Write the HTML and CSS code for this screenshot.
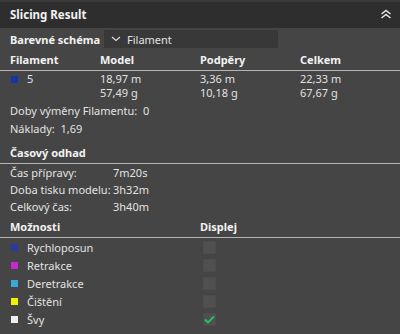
FILE: index.html
```html
<!DOCTYPE html>
<html>
<head>
<meta charset="utf-8">
<link rel="stylesheet" href="styles.css">
</head>
<body>
<div class="panel">
  <div class="header">
    <span class="title">Slicing Result</span>
    <svg class="collapse" width="12" height="10" viewBox="0 0 12 10"><path d="M1.5 5 L6 1.5 L10.5 5 M1.5 9 L6 5.5 L10.5 9" fill="none" stroke="#e8e8e8" stroke-width="1.4"/></svg>
  </div>
  <div class="scheme">
    <span class="bold">Barevné schéma</span>
    <div class="combo">
      <svg width="10" height="6" viewBox="0 0 10 6"><path d="M1 1 L5 4.5 L9 1" fill="none" stroke="#ddd" stroke-width="1.2"/></svg>
      <span>Filament</span>
    </div>
  </div>
  <div class="grid4 head">
    <span>Filament</span><span>Model</span><span>Podpěry</span><span>Celkem</span>
  </div>
  <div class="grid4 data">
    <span class="fil"><i class="sq" style="background:#1436a8"></i>5</span>
    <span>18,97 m<br>57,49 g</span>
    <span>3,36 m<br>10,18 g</span>
    <span>22,33 m<br>67,67 g</span>
  </div>
  <div class="line">Doby výměny Filamentu:&nbsp; 0</div>
  <div class="line">Náklady:&nbsp; 1,69</div>
  <div class="section">Časový odhad</div>
  <div class="times">
    <span>Čas přípravy:</span><span>7m20s</span>
    <span>Doba tisku modelu:</span><span>3h32m</span>
    <span>Celkový čas:</span><span>3h40m</span>
  </div>
  <div class="opts head">
    <span>Možnosti</span><span>Displej</span>
  </div>
  <div class="legend">
    <div class="row"><span class="lbl"><i class="sq" style="background:#2a3aa0"></i>Rychloposun</span><span class="cb"></span></div>
    <div class="row"><span class="lbl"><i class="sq" style="background:#c42ad0"></i>Retrakce</span><span class="cb"></span></div>
    <div class="row"><span class="lbl"><i class="sq" style="background:#3aa8d8"></i>Deretrakce</span><span class="cb"></span></div>
    <div class="row"><span class="lbl"><i class="sq" style="background:#f2f200"></i>Čištění</span><span class="cb"></span></div>
    <div class="row"><span class="lbl"><i class="sq" style="background:#eeeeee"></i>Švy</span><span class="cb on"><svg width="11" height="9" viewBox="0 0 11 9"><path d="M1 4.5 L4 7.5 L10 1.5" fill="none" stroke="#1ec85a" stroke-width="1.8"/></svg></span></div>
  </div>
</div>
</body>
</html>
```
FILE: styles.css
```css
* { box-sizing: border-box; }
html, body { margin: 0; padding: 0; }
body {
  width: 400px;
  height: 334px;
  background: #454545;
  font-family: "Noto Sans", "Open Sans", sans-serif;
  font-size: 11px;
  color: #e2e2e2;
  overflow: hidden;
}
.panel { display: flex; flex-direction: column; }
.header {
  height: 28px;
  background: #2e2e2e;
  border-top: 2px solid #3a3a3a;
  display: flex;
  align-items: center;
  justify-content: space-between;
  padding: 0 8px 0 10px;
}
.title { font-weight: 700; color: #f2f2f2; font-size: 11.5px; margin-top: -2px; }
.collapse { margin-top: -2px; }
.scheme {
  display: flex;
  align-items: center;
  height: 22px;
  padding: 0 10px;
}
.bold { font-weight: 700; color: #f2f2f2; width: 94px; }
.combo {
  width: 174px;
  height: 18px;
  background: #383838;
  border-radius: 2px;
  display: flex;
  align-items: center;
  gap: 6px;
  padding-left: 7px;
  color: #e2e2e2;
}
.grid4 {
  display: grid;
  grid-template-columns: 90px 100px 100px 1fr;
  padding: 0 10px;
}
.head {
  font-weight: 700;
  color: #f2f2f2;
  border-bottom: 1px solid #b4b4b4;
  height: 21px;
  line-height: 19px;
}
.data { padding-top: 1px; line-height: 14px; height: 31px; }
.fil { display: flex; align-items: flex-start; }
.sq { display: inline-block; width: 7px; height: 7px; margin: 4px 9px 0 1px; flex: none; }
.line { padding: 0 10px; height: 18px; line-height: 18px; }
.section {
  font-weight: 700;
  color: #f2f2f2;
  padding: 0 10px;
  margin-top: 6px;
  height: 20px;
  line-height: 17px;
  border-bottom: 1px solid #b4b4b4;
}
.times {
  display: grid;
  grid-template-columns: 103px 1fr;
  padding: 0 10px;
  line-height: 17px;
}
.opts {
  display: grid;
  grid-template-columns: 190px 1fr;
  padding: 0 10px;
  margin-top: 2px;
}
.legend { padding: 0 10px; }
.row { display: flex; height: 18.2px; align-items: center; }
.lbl { width: 193px; display: flex; align-items: center; }
.lbl .sq { margin: 0 9px 0 1px; }
.cb {
  width: 13px; height: 13px;
  background: #505050;
  border: 1px solid #4c4c4c;
  display: flex; align-items: center; justify-content: center;
}
```
